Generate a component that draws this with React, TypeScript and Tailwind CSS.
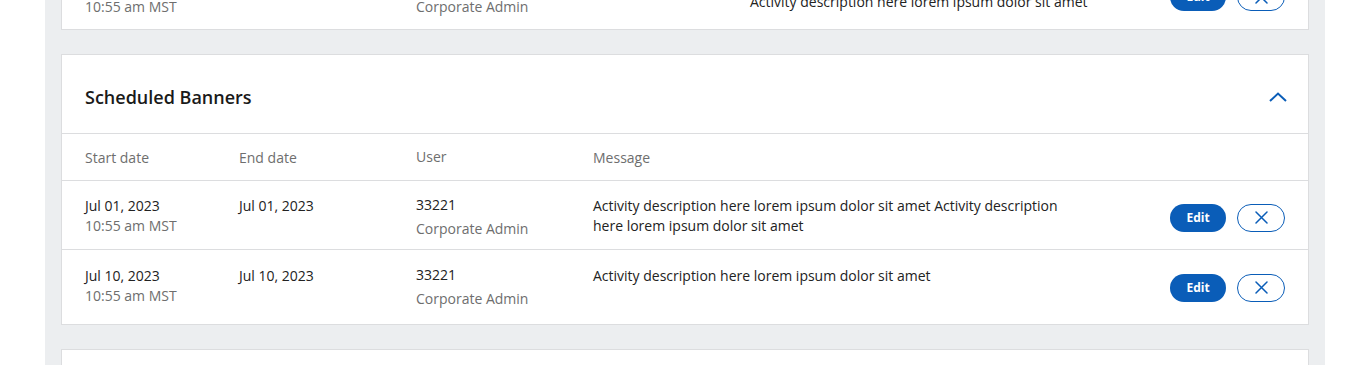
import React from "react";

interface Banner {
  start: string;
  time: string;
  end: string;
  user: string;
  role: string;
  message: string;
}

const banners: Banner[] = [
  {
    start: "Jul 01, 2023",
    time: "10:55 am MST",
    end: "Jul 01, 2023",
    user: "33221",
    role: "Corporate Admin",
    message:
      "Activity description here lorem ipsum dolor sit amet Activity description here lorem ipsum dolor sit amet",
  },
  {
    start: "Jul 10, 2023",
    time: "10:55 am MST",
    end: "Jul 10, 2023",
    user: "33221",
    role: "Corporate Admin",
    message: "Activity description here lorem ipsum dolor sit amet",
  },
];

function CloseIcon() {
  return (
    <svg width="13" height="13" viewBox="0 0 13 13" fill="none">
      <path
        d="M1 1l11 11M12 1L1 12"
        stroke="#0a5db8"
        strokeWidth="1.5"
        strokeLinecap="round"
      />
    </svg>
  );
}

function Actions() {
  return (
    <div className="ml-auto flex items-center gap-[11px] self-center">
      <button
        type="button"
        className="h-[28px] w-[56px] rounded-full bg-[#0a5db8] text-[12px] font-bold text-white"
      >
        Edit
      </button>
      <button
        type="button"
        className="flex h-[28px] w-[48px] items-center justify-center rounded-full border border-[#0a5db8] bg-white"
      >
        <CloseIcon />
      </button>
    </div>
  );
}

export default function App() {
  return (
    <div
      className="h-[365px] overflow-hidden bg-white"
      style={{ fontFamily: '"Open Sans", "Noto Sans", sans-serif' }}
    >
      <div className="ml-[45px] flex h-full w-[1280px] flex-col bg-[#eceef0] px-[16px]">
        {/* previous card, scrolled mostly out of view */}
        <div className="-mt-[39px] shrink-0 border border-[#dcdddf] bg-white">
          <div className="flex pr-[23px] pl-[23px] pt-[15px] pb-[12px] text-[14px] leading-[20px]">
            <div className="w-[154px] shrink-0">
              <div className="text-[#222]">Jun 28, 2023</div>
              <div className="text-[#6e6e6e]">10:55 am MST</div>
            </div>
            <div className="w-[177px] shrink-0 text-[#222]">Jun 30, 2023</div>
            <div className="w-[177px] shrink-0">
              <div className="text-[#222]">33221</div>
              <div className="text-[#6e6e6e]">Corporate Admin</div>
            </div>
            <div className="w-[157px] shrink-0" />
            <div className="mt-[15px] w-[400px] shrink-0 text-[#222]">
              Activity description here lorem ipsum dolor sit amet
            </div>
            <Actions />
          </div>
        </div>

        <div className="mt-[24px] shrink-0 border border-[#dcdddf] bg-white">
          <div className="flex items-center justify-between border-b border-[#dcdddf] pl-[23px] pr-[21px] pt-[30px] pb-[24px]">
            <h2 className="text-[18px] font-semibold leading-[24px] text-[#1a1a1a]">
              Scheduled Banners
            </h2>
            <svg width="18" height="10" viewBox="0 0 18 10" fill="none">
              <polyline
                points="1,9 9,1.5 17,9"
                stroke="#0a5db8"
                strokeWidth="2"
              />
            </svg>
          </div>

          <div className="flex h-[47px] items-center border-b border-[#dcdddf] pl-[23px] text-[14px] text-[#6e6e6e]">
            <div className="w-[154px] shrink-0">Start date</div>
            <div className="w-[177px] shrink-0">End date</div>
            <div className="w-[177px] shrink-0 -mt-[2px]">User</div>
            <div>Message</div>
          </div>

          {banners.map((b, i) => (
            <div
              key={i}
              className={
                i === banners.length - 1
                  ? "flex pl-[23px] pr-[23px] pt-[16px] pb-[15px] text-[14px] leading-[20px]"
                  : "flex border-b border-[#dcdddf] pl-[23px] pr-[23px] pt-[15px] pb-[10px] text-[14px] leading-[20px]"
              }
            >
              <div className="w-[154px] shrink-0">
                <div className="text-[#222]">{b.start}</div>
                <div className="text-[#6e6e6e]">{b.time}</div>
              </div>
              <div className="w-[177px] shrink-0 text-[#222]">{b.end}</div>
              <div className="w-[177px] shrink-0 -mt-[1px]">
                <div className="text-[#222]">{b.user}</div>
                <div className="mt-[4px] text-[#6e6e6e]">{b.role}</div>
              </div>
              <div className="w-[480px] shrink-0 text-[#222]">{b.message}</div>
              <Actions />
            </div>
          ))}
        </div>

        <div className="mt-[24px] h-[60px] shrink-0 border border-[#dcdddf] bg-white" />
      </div>
    </div>
  );
}
